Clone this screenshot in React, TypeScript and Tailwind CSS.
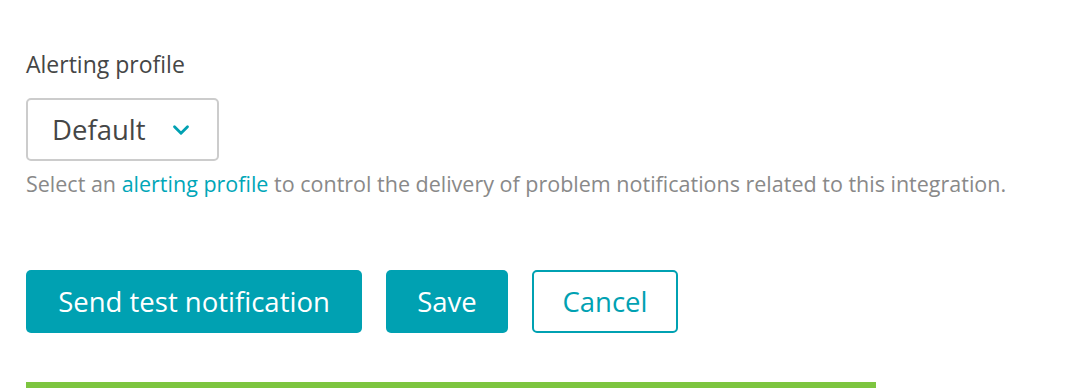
import { ChevronDown } from "lucide-react";

export default function App() {
  return (
    <div className="min-h-[388px] bg-white pl-[26px] pt-[49px] font-['Open_Sans',sans-serif] overflow-hidden">
      <label className="block text-[23px] leading-[30px] text-[#454646]">Alerting profile</label>

      <button className="mt-[19px] flex h-[63px] w-[193px] items-center rounded-[5px] border-2 border-[#cccccc] bg-white pl-[24px] text-[27.5px] text-[#454646]">
        Default
        <ChevronDown size={26} strokeWidth={2.6} className="ml-[22px] text-[#00a1b2]" />
      </button>

      <p className="mt-[10px] text-[21.5px] leading-[26px] text-[#898989]">
        Select an <a className="text-[#00a6b8]">alerting profile</a> to control the delivery of problem notifications related to this integration.
      </p>

      <div className="mt-[73px] flex gap-[24px]">
        <button className="flex h-[63px] w-[336px] items-center justify-center rounded-[5px] bg-[#00a1b2] text-[27.5px] text-white">
          Send test notification
        </button>
        <button className="flex h-[63px] w-[122px] items-center justify-center rounded-[5px] bg-[#00a1b2] text-[27.5px] text-white">
          Save
        </button>
        <button className="flex h-[63px] w-[146px] items-center justify-center rounded-[5px] border-2 border-[#00a1b2] bg-white text-[27.5px] text-[#00a1b2]">
          Cancel
        </button>
      </div>

      <div className="mt-[49px] h-[6px] w-[850px] bg-[#7dc540]" />
    </div>
  );
}
